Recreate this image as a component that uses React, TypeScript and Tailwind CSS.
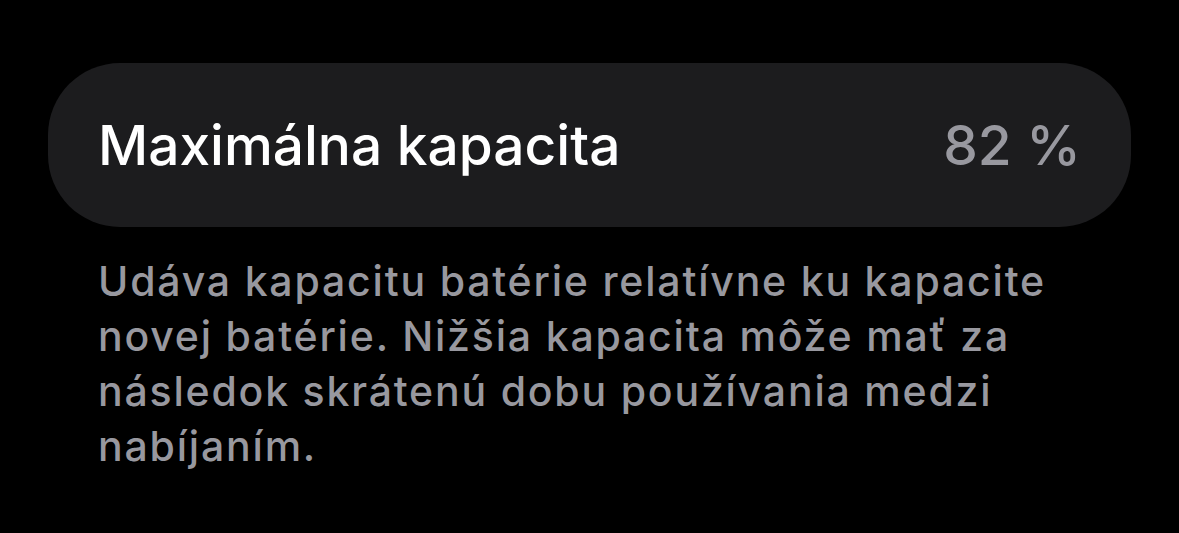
export default function App() {
  return (
    <div
      className="w-[1179px] h-[533px] bg-black overflow-hidden pt-[63px] px-[48px]"
      style={{ fontFamily: "Inter, 'Noto Sans', sans-serif" }}
    >
      <div className="h-[164px] rounded-[72px] bg-[#1c1c1e] flex items-center justify-between pl-[50px] pr-[50px]">
        <span className="text-white text-[55px] font-medium leading-none">Maximálna kapacita</span>
        <span className="text-[#98989f] text-[55px] font-medium leading-none">82 %</span>
      </div>
      <p className="mt-[27px] pl-[50px] pr-[40px] text-[#98989f] text-[41px] leading-[55px] font-medium tracking-[1.8px]">
        Udáva kapacitu batérie relatívne ku kapacite novej batérie. Nižšia kapacita môže mať za následok skrátenú dobu používania medzi nabíjaním.
      </p>
    </div>
  );
}
